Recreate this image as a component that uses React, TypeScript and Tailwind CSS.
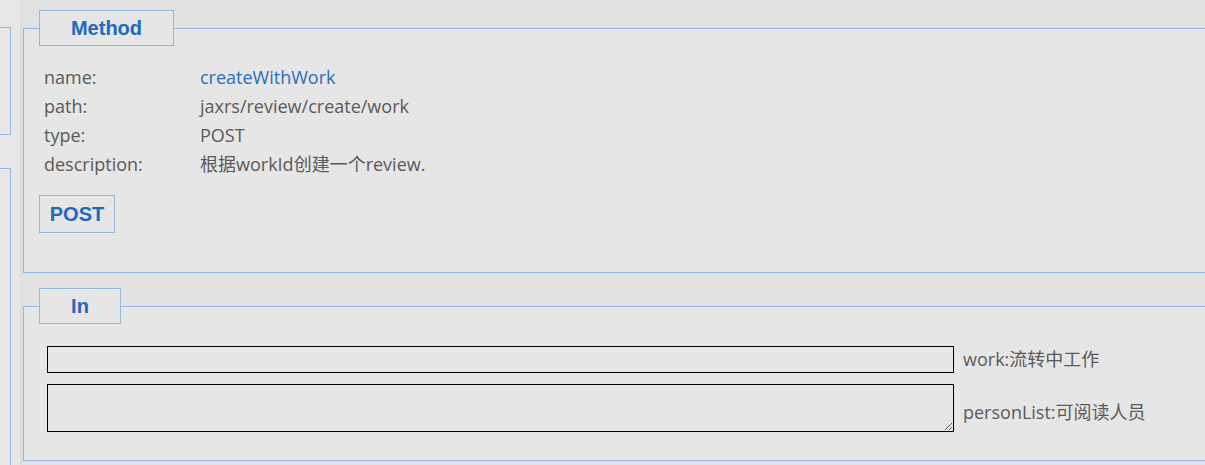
const info = [
  { label: 'name:', value: 'createWithWork', link: true },
  { label: 'path:', value: 'jaxrs/review/create/work' },
  { label: 'type:', value: 'POST' },
  { label: 'description:', value: '根据workId创建一个review.' },
];

const bodyFont = { fontFamily: '"Open Sans", "Noto Sans CJK SC", sans-serif' };
const boldFont = { fontFamily: '"Liberation Sans", Arial, sans-serif' };

export default function App() {
  return (
    <div className="flex h-[465px] w-[1205px] overflow-hidden bg-[#e1e1e1]" style={bodyFont}>
      {/* clipped left panel */}
      <div className="flex w-[20px] shrink-0 flex-col bg-[#e7e7e7]">
        <div className="mt-[27px] h-[108px] w-[11px] border-y border-r border-[#93b8e1]" />
        <div className="mt-[33px] w-[11px] flex-1 border-t border-r border-[#93b8e1]" />
      </div>
      <div className="w-[3px] shrink-0 bg-[#dedede]" />

      <div className="min-w-0 flex-1 overflow-hidden pt-[10px]">
        <fieldset className="w-[1200px] border border-[#93b8e1] bg-[#e6e6e6] pl-[15px] pt-[17px] pb-[39px]">
          <legend className="h-[36px] w-[135px] border border-[#93b8e1] bg-[#e6e6e6]">
            <div className="text-center text-[20px] leading-[34px] font-bold text-[#2168bf]" style={boldFont}>
              Method
            </div>
          </legend>
          <div className="pl-[5px] text-[18px] leading-[29px] text-[#5a5a5a]">
            {info.map(r => (
              <div key={r.label} className="flex">
                <span className="w-[156px] shrink-0">{r.label}</span>
                <span className={r.link ? 'text-[#2a6ebd]' : ''}>{r.value}</span>
              </div>
            ))}
          </div>
          <button
            className="mt-[16px] h-[38px] w-[76px] border border-[#93b8e1] text-center text-[20px] font-bold text-[#2168bf]"
            style={boldFont}
          >
            POST
          </button>
        </fieldset>

        <fieldset className="mt-[15px] w-[1200px] border border-[#93b8e1] bg-[#e6e6e6] pl-[15px] pt-[22px] pb-[28px]">
          <legend className="h-[36px] w-[82px] border border-[#93b8e1] bg-[#e6e6e6]">
            <div className="text-center text-[20px] leading-[34px] font-bold text-[#2168bf]" style={boldFont}>
              In
            </div>
          </legend>
          <div className="flex flex-col gap-[11px] pl-[8px] text-[18px] text-[#5a5a5a]">
            <div className="flex h-[27px] items-center">
              <input type="text" className="h-[27px] w-[907px] shrink-0 border border-black bg-transparent outline-none" />
              <span className="ml-[9px] leading-[27px]">work:流转中工作</span>
            </div>
            <div className="flex items-center">
              <textarea className="block h-[48px] w-[907px] shrink-0 border border-black bg-transparent outline-none" />
              <span className="ml-[9px] pt-[8px] leading-[29px]">personList:可阅读人员</span>
            </div>
          </div>
        </fieldset>
      </div>
    </div>
  );
}
